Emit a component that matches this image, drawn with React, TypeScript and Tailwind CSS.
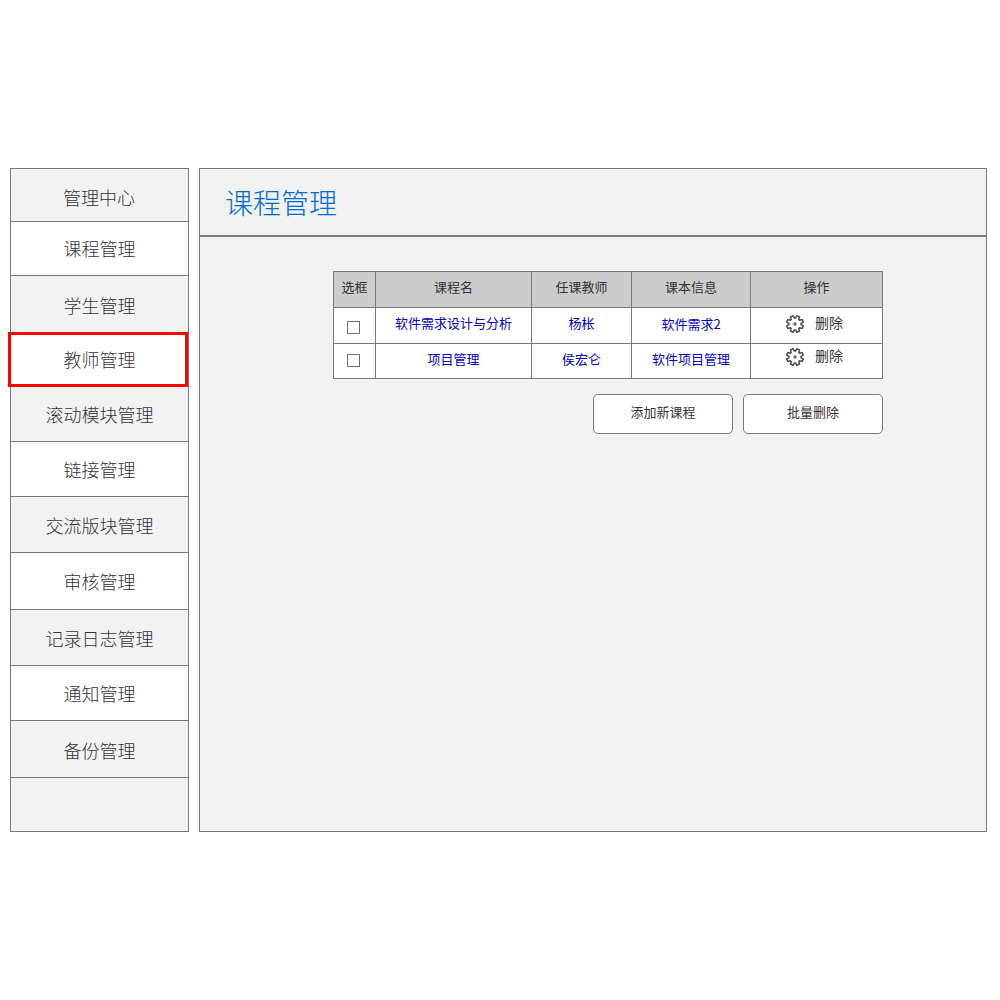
import React from "react";

type MenuItem = { label: string; box: string; active?: boolean };

const menu: MenuItem[] = [
  { label: "管理中心", box: "h-[53px] pt-[19px] bg-[#f2f2f2] border-b pr-px" },
  { label: "课程管理", box: "h-[54px] pt-[17px] bg-white border-b" },
  { label: "学生管理", box: "h-[56px] pt-5 bg-[#f2f2f2]" },
  { label: "教师管理", box: "h-[55px] pt-[18px] bg-white", active: true },
  { label: "滚动模块管理", box: "h-[55px] pt-[18px] bg-[#f2f2f2] border-b" },
  { label: "链接管理", box: "h-[55px] pt-[18px] bg-white border-b" },
  { label: "交流版块管理", box: "h-[56px] pt-[19px] bg-[#f2f2f2] border-b" },
  { label: "审核管理", box: "h-[57px] pt-[19px] bg-white border-b" },
  { label: "记录日志管理", box: "h-[56px] pt-[19px] bg-[#f2f2f2] border-b" },
  { label: "通知管理", box: "h-[55px] pt-[18px] bg-white border-b" },
  { label: "备份管理", box: "h-[57px] pt-5 bg-[#f2f2f2] border-b" },
  { label: "", box: "h-[53px] bg-[#f2f2f2]" },
];

const point = (r: number, deg: number) => {
  const a = (deg * Math.PI) / 180;
  return `${(9 + r * Math.cos(a)).toFixed(2)} ${(9 + r * Math.sin(a)).toFixed(2)}`;
};

const gearPath =
  "M" +
  Array.from({ length: 8 }, (_, i) => {
    const c = 22.5 + i * 45;
    return [point(6, c - 17), point(8.5, c - 10), point(8.5, c + 10), point(6, c + 17)].join("L");
  }).join("L") +
  "Z";

function Gear() {
  return (
    <svg width="18" height="18" viewBox="0 0 18 18" className="shrink-0 overflow-visible">
      <path d={gearPath} fill="none" stroke="#4a4a52" strokeWidth="1.5" strokeLinejoin="round" />
      <circle cx="9" cy="9" r="1.8" fill="#6b6b70" />
    </svg>
  );
}

const cols = "grid grid-cols-[42px_156px_100px_119px_132px]";
const cell = "flex justify-center border-r border-[#797979]";

type RowProps = {
  box: string;
  rowPad: string;
  checkPad: string;
  actionPad: string;
  bookPad: string;
  name: string;
  teacher: string;
  book: string;
};

function Row({ box, rowPad, checkPad, actionPad, bookPad, name, teacher, book }: RowProps) {
  return (
    <div className={`${cols} ${box} border-b border-[#797979] bg-white text-[#0000bf]`}>
      <div className={`${cell} ${checkPad} pr-[2px]`}>
        <span className="size-[13px] border border-[#707070] bg-white" />
      </div>
      <div className={`${cell} ${rowPad}`}>{name}</div>
      <div className={`${cell} ${rowPad}`}>{teacher}</div>
      <div className={`${cell} ${bookPad}`}>{book}</div>
      <div className={`${cell} ${actionPad} !justify-start pl-[35px] text-[14px] leading-[14px] text-[#333]`}>
        <Gear />
        <span className="ml-[11px]">删除</span>
      </div>
    </div>
  );
}

export default function App() {
  return (
    <div className="flex h-[1000px] w-[1000px] gap-[10px] bg-white pl-[10px] pt-[168px] font-[Noto_Sans_CJK_SC,sans-serif] text-[#333]">
      <nav className="flex h-[664px] w-[179px] flex-col border border-[#797979] text-[18px] font-light leading-[18px]">
        {menu.map((item, i) => (
          <div key={i} className={`${item.box} relative flex shrink-0 justify-center border-[#797979]`}>
            {item.label}
            {item.active && <span className="absolute inset-y-0 -left-[3px] w-[180px] border-[3px] border-[#ff0000]" />}
          </div>
        ))}
      </nav>

      <main className="flex h-[664px] w-[788px] flex-col border border-[#797979] bg-[#f2f2f2]">
        <h1 className="h-[68px] border-b-2 border-[#797979] pl-[25px] pt-[19px] text-[28px] font-light leading-[28px] text-[#006cd0]">
          课程管理
        </h1>
        <div className="ml-[133px] mt-[34px] w-[550px] border-l border-t border-[#797979] text-[13px] leading-[14px]">
          <div className={`${cols} h-[36px] border-b border-[#797979] bg-[#cccccc]`}>
            {["选框", "课程名", "任课教师", "课本信息", "操作"].map((t) => (
              <div key={t} className={`${cell} pt-[8px]`}>{t}</div>
            ))}
          </div>
          <Row box="h-[36px]" rowPad="pt-[8px]" bookPad="pt-[9px]" checkPad="pt-[13px]" actionPad="pt-[7px]" name="软件需求设计与分析" teacher="杨枨" book="软件需求2" />
          <Row box="h-[35px]" rowPad="pt-[8px]" bookPad="pt-[8px]" checkPad="pt-[10px]" actionPad="pt-[4px]" name="项目管理" teacher="侯宏仑" book="软件项目管理" />
        </div>
        <div className="ml-[393px] mt-[15px] flex gap-[10px] text-[13px] leading-[14px]">
          <button className="flex h-10 w-[140px] justify-center rounded-[5px] border border-[#797979] bg-white pt-[10px]">添加新课程</button>
          <button className="flex h-10 w-[140px] justify-center rounded-[5px] border border-[#797979] bg-white pt-[10px]">批量删除</button>
        </div>
      </main>
    </div>
  );
}
